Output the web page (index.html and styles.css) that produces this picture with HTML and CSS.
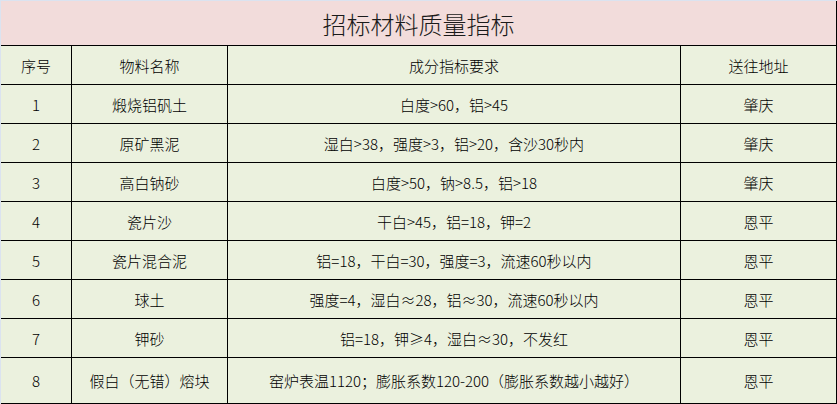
FILE: index.html
```html
<!DOCTYPE html>
<html lang="zh-CN">
<head>
<meta charset="utf-8">
<title>招标材料质量指标</title>
<link rel="stylesheet" href="styles.css">
</head>
<body>
<div class="sheet">
  <div class="cell title">招标材料质量指标</div>
  <div class="cell">序号</div>
  <div class="cell">物料名称</div>
  <div class="cell">成分指标要求</div>
  <div class="cell">送往地址</div>

  <div class="cell">1</div>
  <div class="cell">煅烧铝矾土</div>
  <div class="cell">白度&gt;60，铝&gt;45</div>
  <div class="cell">肇庆</div>

  <div class="cell">2</div>
  <div class="cell">原矿黑泥</div>
  <div class="cell">湿白&gt;38，强度&gt;3，铝&gt;20，含沙30秒内</div>
  <div class="cell">肇庆</div>

  <div class="cell">3</div>
  <div class="cell">高白钠砂</div>
  <div class="cell">白度&gt;50，钠&gt;8.5，铝&gt;18</div>
  <div class="cell">肇庆</div>

  <div class="cell">4</div>
  <div class="cell">瓷片沙</div>
  <div class="cell">干白&gt;45，铝=18，钾=2</div>
  <div class="cell">恩平</div>

  <div class="cell">5</div>
  <div class="cell">瓷片混合泥</div>
  <div class="cell">铝=18，干白=30，强度=3，流速60秒以内</div>
  <div class="cell">恩平</div>

  <div class="cell">6</div>
  <div class="cell">球土</div>
  <div class="cell">强度=4，湿白≈28，铝≈30，流速60秒以内</div>
  <div class="cell">恩平</div>

  <div class="cell">7</div>
  <div class="cell">钾砂</div>
  <div class="cell">铝=18，钾≥4，湿白≈30，不发红</div>
  <div class="cell">恩平</div>

  <div class="cell">8</div>
  <div class="cell">假白（无错）熔块</div>
  <div class="cell">窑炉表温1120；膨胀系数120-200（膨胀系数越小越好）</div>
  <div class="cell">恩平</div>
</div>
</body>
</html>
```

FILE: styles.css
```css
html, body {
  margin: 0;
  padding: 0;
}
body {
  background: #dbe3f0;
  padding: 1px 0 0 1px;
  width: 837px;
  height: 404px;
  box-sizing: border-box;
  overflow: hidden;
}
.sheet {
  display: grid;
  grid-template-columns: 70px 155px 452px 155px;
  grid-template-rows: 44px repeat(8, 38px) 45px;
  gap: 1px;
  background: #000;
  padding: 0 1px 1px 0;
  width: 836px;
  box-sizing: border-box;
  font-family: "Noto Sans CJK SC", "Noto Sans", sans-serif;
  font-size: 15px;
  font-weight: 300;
  color: #000;
}
.cell {
  background: #ebf1de;
  display: flex;
  align-items: center;
  justify-content: center;
  white-space: nowrap;
  line-height: 1;
}
.title {
  grid-column: 1 / -1;
  background: #f2dcdb;
  font-size: 24px;
  color: #1a1a1a;
  padding-top: 2px;
}
```
